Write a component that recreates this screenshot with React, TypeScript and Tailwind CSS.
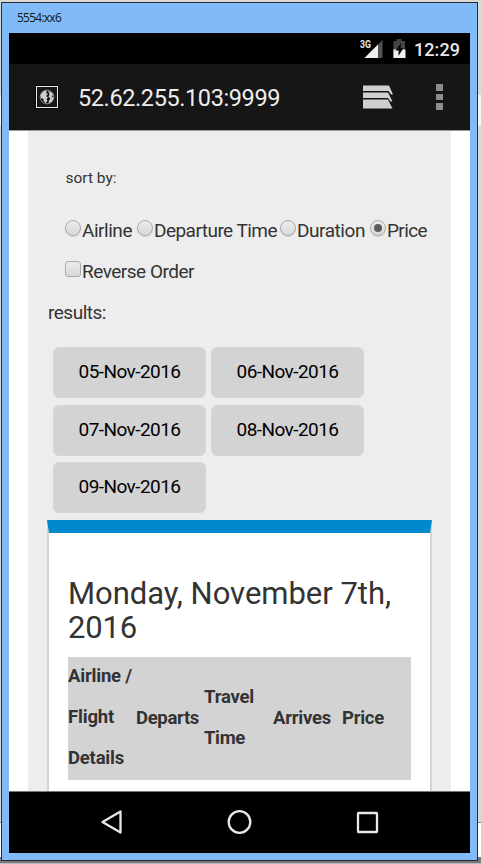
import React from 'react';

const dates = ['05-Nov-2016', '06-Nov-2016', '07-Nov-2016', '08-Nov-2016', '09-Nov-2016'];

/* One line of text drawn at a fixed advance width. */
function Fit({ w, children }: { w: number; children: string }) {
  const ref = React.useRef<HTMLSpanElement>(null);
  React.useLayoutEffect(() => {
    const el = ref.current;
    if (!el) return;
    const apply = () => {
      el.style.letterSpacing = '0px';
      const n = el.getBoundingClientRect().width;
      el.style.letterSpacing = `${(w - n) / children.length}px`;
    };
    apply();
    document.fonts?.ready.then(apply);
  }, [w, children]);
  return (
    <span ref={ref} className="inline-block self-center whitespace-nowrap">
      {children}
    </span>
  );
}

function Radio({ checked = false }: { checked?: boolean }) {
  return (
    <span className="mb-[5px] flex h-4 w-4 shrink-0 items-center justify-center rounded-full border border-[#aaaaaa] bg-linear-to-b from-[#ececec] to-[#d8d8d8] shadow-[0_1px_1px_#cfcfcf]">
      {checked && <span className="h-2 w-2 rounded-full bg-[#5c5c5c]" />}
    </span>
  );
}

function Option({ label, textWidth, width, checked }: { label: string; textWidth: number; width: string; checked?: boolean }) {
  return (
    <label className={`flex shrink-0 items-center gap-px ${width}`}>
      <Radio checked={checked} />
      <span className="pt-[2px]"><Fit w={textWidth}>{label}</Fit></span>
    </label>
  );
}

function StatusBar() {
  return (
    <div className="flex h-[31px] shrink-0 items-center bg-black pl-[351px] text-[#e8e8e8]">
      <svg className="h-[31px] w-[54px] shrink-0" viewBox="360 33 54 31">
        <text x="360" y="47.5" fontSize="10.5" fontWeight="700" fill="#e8e8e8" textLength="11" lengthAdjust="spacingAndGlyphs" fontFamily="Roboto, sans-serif">3G</text>
        <path d="M382.5 40v18h-18z" fill="#505050" />
        <path d="M378 44.5v13.5h-13.5z" fill="#f0f0f0" />
        <path d="M393.5 41h3v-2h5v2h3.5v17h-12z" fill="#444" />
        <path d="M393.5 49.5h12v8.5h-12z" fill="#f0f0f0" />
        <path d="M401 43l-5.5 7.5h3v5.5l5-8h-3z" fill="#080808" />
      </svg>
      <div className="pt-px text-[18px] font-medium leading-[31px]"><Fit w={46}>12:29</Fit></div>
    </div>
  );
}

function Toolbar() {
  return (
    <div className="flex h-[67px] shrink-0 items-center border-b border-[#999] bg-[#161616] pl-[26px] text-[#eeeeee]">
      <svg className="h-6 w-6 shrink-0" viewBox="0 0 24 24">
        <rect x=".5" y=".5" width="23" height="23" fill="#161616" stroke="#050505" />
        <rect x="1.5" y="1.5" width="21" height="21" fill="#161616" stroke="#ededed" />
        <circle cx="12" cy="12" r="6.9" fill="#111" stroke="#999" strokeWidth=".9" />
        <path d="M5.5 10l2-3 3-1.5 1.5 1-1 1.5 2 1-2 2 2 1.5-1.5 1.5 1 2-2 2-2-2v-2l-2.5-1zM13 6l3 1 2.5 3-2 1 2 2-1.5 3.5-3.5 2 .5-3 1.5-2-2-1.5 1-3z" fill="#cfcfcf" />
      </svg>
      <div className="w-[304px] shrink-0 pl-[19px] pt-[3px] text-[23.5px]"><Fit w={202}>52.62.255.103:9999</Fit></div>
      <svg className="h-6 w-[30px] shrink-0" viewBox="0 0 30 24" fill="#d0d0d0">
        <path d="M0 .5h26l4 9h-2l-2.5-3.5H0zM0 7.5h25l4.5 9h-2l-2.5-3.5H0zM0 14.5h25l4.5 9H0z" />
      </svg>
      <svg className="ml-[42px] h-7 w-2 shrink-0" viewBox="0 0 8 28" fill="#8c8c8c">
        <path d="M1 1h7v7H1zM1 11h7v6H1zM1 20h7v7H1z" />
      </svg>
    </div>
  );
}

function Results() {
  return (
    <main className="flex h-[661px] shrink-0 flex-col overflow-hidden border-b border-[#777] bg-white px-[19px]">
      <div className="h-full w-[423px] bg-[#ededed] px-5">
        <div className="ml-[17.5px] pt-[35px] text-[15.5px] leading-6"><Fit w={51}>sort by:</Fit></div>
        <div className="ml-[17px] mt-5 flex h-[41px] w-[370px] items-center text-[19px]">
          <Option label="Airline" textWidth={50} width="w-[72px]" />
          <Option label="Departure Time" textWidth={123} width="w-[143px]" />
          <Option label="Duration" textWidth={68} width="w-[90px]" />
          <Option label="Price" textWidth={40} width="w-[60px]" checked />
        </div>
        <label className="ml-[17px] flex h-[41px] items-center gap-px text-[19px]">
          <span className="mb-[5px] h-4 w-4 rounded-[3px] border border-[#ababab] bg-linear-to-b from-[#ececec] to-[#d8d8d8]" />
          <span className="pt-[2px]"><Fit w={112}>Reverse Order</Fit></span>
        </label>
        <div className="h-[41px] text-[19px] leading-[41px]"><Fit w={58}>results:</Fit></div>
        <div className="ml-[5px] mt-[14px] grid w-[311px] grid-cols-2 gap-x-[5px] gap-y-[6.5px]">
          {dates.map((date) => (
            <button key={date} className="h-[51px] rounded-[6px] border border-[#d6d6d6] bg-[#d3d3d3] text-[19px] text-black">
              <Fit w={102}>{date}</Fit>
            </button>
          ))}
        </div>
        <section className="-ml-px mt-[7px] h-[280px] w-[385px] border-x-2 border-t-[13px] border-x-[#d3d3d3] border-t-[#0088cf] bg-white px-[19px]">
          <h1 className="mt-11 text-[31px] font-normal leading-[34px]">
            <Fit w={323}>Monday, November 7th,</Fit><br /><Fit w={69}>2016</Fit>
          </h1>
          <div className="mt-3 grid h-[123px] w-[343px] grid-cols-[68px_68px_69px_69px_69px] items-center bg-[#d3d3d3] text-[18.5px] font-bold leading-[41px]">
            <div className="-mt-[2px]"><Fit w={64}>Airline /</Fit><br /><Fit w={46}>Flight</Fit><br /><Fit w={56}>Details</Fit></div>
            <div className="-mt-px"><Fit w={63}>Departs</Fit></div>
            <div className="-mt-[2px]"><Fit w={50}>Travel</Fit><br /><Fit w={41}>Time</Fit></div>
            <div className="-mt-px"><Fit w={58}>Arrives</Fit></div>
            <div className="-mt-px"><Fit w={42}>Price</Fit></div>
          </div>
        </section>
      </div>
    </main>
  );
}

function NavigationBar() {
  return (
    <nav className="h-[61px] shrink-0 bg-black">
      <svg className="h-full w-full" viewBox="9 792 461 61" fill="none" stroke="#e8e8e8" strokeWidth="2.3" strokeLinejoin="round">
        <path d="M120.5 811.5v21l-18-10.5z" />
        <circle cx="239.5" cy="822" r="10.8" />
        <rect x="358" y="813" width="19" height="19" rx=".5" />
      </svg>
    </nav>
  );
}

export default function App() {
  return (
    <div className="h-[864px] w-[481px] overflow-hidden bg-[linear-gradient(#d9d9d9_95px,#f5f5f5_95px,#f5f5f5_126px,#d9d9d9_126px,#d9d9d9_822px,#888_822px,#888_823px,#fff_823px,#fff_857px,#77777c_857px,#77777c_863px,#bbb_863px)] pl-px pt-[2px] font-[Roboto,sans-serif] text-[#333]">
      <div className="flex h-[859px] w-[477px] flex-col border border-[#292b30] bg-[#80bbf8]">
        <header className="h-[30px] shrink-0 pl-[15px] font-['Open_Sans',sans-serif] text-[12px] leading-[30px] text-[#101820]"><Fit w={44}>5554:xx6</Fit></header>
        <div className="mx-[7px] flex h-[820px] w-[461px] shrink-0 flex-col">
          <StatusBar />
          <Toolbar />
          <Results />
          <NavigationBar />
        </div>
      </div>
    </div>
  );
}
